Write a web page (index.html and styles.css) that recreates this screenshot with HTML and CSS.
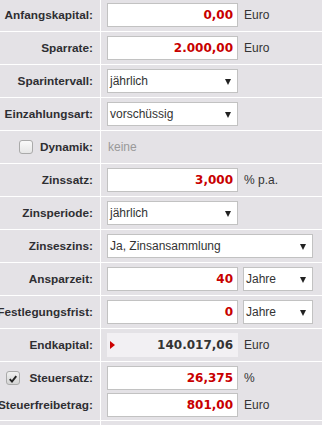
FILE: index.html
```html
<!DOCTYPE html>
<html lang="de">
<head>
<meta charset="utf-8">
<title>Sparrechner</title>
<link rel="stylesheet" href="styles.css">
</head>
<body>
<div class="calc">
  <div class="row first">
    <div class="lab">Anfangskapital:</div>
    <div class="val"><span class="inp">0,00</span><span class="unit">Euro</span></div>
  </div>
  <div class="row">
    <div class="lab">Sparrate:</div>
    <div class="val"><span class="inp">2.000,00</span><span class="unit">Euro</span></div>
  </div>
  <div class="row">
    <div class="lab">Sparintervall:</div>
    <div class="val"><span class="sel">jährlich<i class="arr"></i></span></div>
  </div>
  <div class="row">
    <div class="lab">Einzahlungsart:</div>
    <div class="val"><span class="sel">vorschüssig<i class="arr"></i></span></div>
  </div>
  <div class="row">
    <div class="lab"><span class="cb"></span>Dynamik:</div>
    <div class="val"><span class="muted">keine</span></div>
  </div>
  <div class="row">
    <div class="lab">Zinssatz:</div>
    <div class="val"><span class="inp">3,000</span><span class="unit">% p.a.</span></div>
  </div>
  <div class="row">
    <div class="lab">Zinsperiode:</div>
    <div class="val"><span class="sel">jährlich<i class="arr"></i></span></div>
  </div>
  <div class="row">
    <div class="lab">Zinseszins:</div>
    <div class="val"><span class="sel wide">Ja, Zinsansammlung<i class="arr"></i></span></div>
  </div>
  <div class="row">
    <div class="lab">Ansparzeit:</div>
    <div class="val"><span class="inp">40</span><span class="sel small">Jahre<i class="arr"></i></span></div>
  </div>
  <div class="row">
    <div class="lab">Festlegungsfrist:</div>
    <div class="val"><span class="inp">0</span><span class="sel small">Jahre<i class="arr"></i></span></div>
  </div>
  <div class="row">
    <div class="lab">Endkapital:</div>
    <div class="val"><span class="result"><i class="tri"></i>140.017,06</span><span class="unit">Euro</span></div>
  </div>
  <div class="row double">
    <div class="lab">
      <div class="sub"><span class="cb checked"><svg viewBox="0 0 14 14" width="14" height="14"><path d="M3.2 7.2 L5.8 10 L10.8 3.6" fill="none" stroke="#222" stroke-width="2.2"/></svg></span>Steuersatz:</div>
      <div class="sub">Steuerfreibetrag:</div>
    </div>
    <div class="val">
      <div class="sub"><span class="inp">26,375</span><span class="unit">%</span></div>
      <div class="sub"><span class="inp">801,00</span><span class="unit">Euro</span></div>
    </div>
  </div>
  <div class="row last">
    <div class="lab"></div>
    <div class="val"></div>
  </div>
</div>
</body>
</html>
```
FILE: styles.css
```css
html, body {
  margin: 0;
  padding: 0;
  background: #e4e2e6;
}
body {
  width: 322px;
  height: 425px;
  overflow: hidden;
  font-family: "Liberation Sans", Arial, sans-serif;
  font-size: 12px;
  color: #333;
}
.calc {
  margin-top: -1px;
}
.row {
  display: grid;
  grid-template-columns: 101px 1fr;
  border-bottom: 1px solid #fff;
  height: 32px;
}
.row.double {
  height: 58px;
}
.row.last {
  height: 5px;
  border-bottom: 0;
}
.lab {
  border-right: 1px solid #fff;
  display: flex;
  align-items: center;
  justify-content: flex-end;
  padding-right: 7px;
  font-weight: bold;
  font-size: 11.8px;
  white-space: nowrap;
  color: #2e2e32;
}
.double .lab {
  flex-direction: column;
  align-items: flex-end;
  justify-content: flex-start;
  padding-top: 4px;
  gap: 3px;
}
.sub {
  display: flex;
  align-items: center;
  height: 24px;
}
.val {
  display: flex;
  align-items: center;
  padding-left: 6px;
}
.double .val {
  flex-direction: column;
  align-items: flex-start;
  justify-content: flex-start;
  padding-top: 4px;
  gap: 3px;
}
.inp {
  box-sizing: border-box;
  width: 131px;
  height: 24px;
  background: #fff;
  border: 1px solid #c2c2c2;
  display: flex;
  align-items: center;
  justify-content: flex-end;
  padding-right: 4px;
  font-family: "DejaVu Sans", Verdana, sans-serif;
  font-weight: bold;
  font-size: 12px;
  color: #c80000;
}
.unit {
  margin-left: 6px;
  color: #333;
}
.muted {
  color: #999;
  padding-left: 1px;
}
.sel {
  box-sizing: border-box;
  position: relative;
  width: 131px;
  height: 24px;
  background: #fff;
  border: 1px solid #c2c2c2;
  display: flex;
  align-items: center;
  padding-left: 2px;
  color: #333;
}
.sel.wide {
  width: 206px;
}
.sel.small {
  width: 70px;
  margin-left: 5px;
}
.arr {
  position: absolute;
  right: 6px;
  top: 9px;
  width: 0;
  height: 0;
  border-left: 3.5px solid transparent;
  border-right: 3.5px solid transparent;
  border-top: 6px solid #222;
}
.cb {
  box-sizing: border-box;
  width: 14px;
  height: 14px;
  border: 1px solid #aaa;
  border-radius: 3px;
  background: linear-gradient(#fafafa, #e6e6e6);
  margin-right: 7px;
  display: inline-flex;
}
.cb.checked {
  background: linear-gradient(#f0f0f0, #d4d4d4);
  margin-right: 9px;
}
.cb svg {
  display: block;
}
.result {
  box-sizing: border-box;
  position: relative;
  width: 131px;
  height: 24px;
  background: #f2f0f3;
  display: flex;
  align-items: center;
  justify-content: flex-end;
  padding-right: 5px;
  font-family: "DejaVu Sans", Verdana, sans-serif;
  font-weight: bold;
  font-size: 12px;
  color: #333;
}
.tri {
  position: absolute;
  left: 3px;
  top: 8px;
  width: 0;
  height: 0;
  border-top: 4px solid transparent;
  border-bottom: 4px solid transparent;
  border-left: 5px solid #c00;
}
```
